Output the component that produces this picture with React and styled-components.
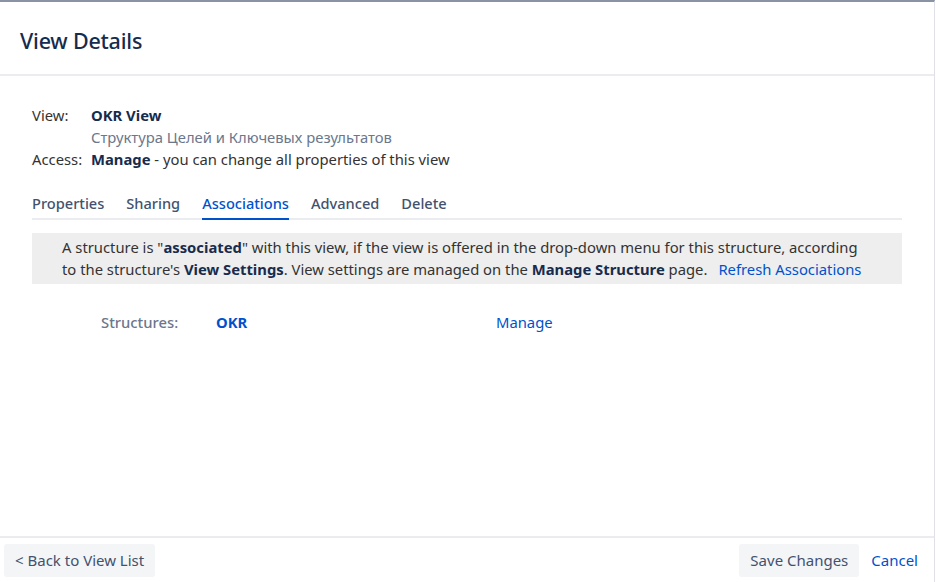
import React from 'react';
import styled, { createGlobalStyle } from 'styled-components';

const Global = createGlobalStyle`
  html, body { margin: 0; padding: 0; background: #fff; }
  body { font-family: "Noto Sans", "Liberation Sans", sans-serif; color: #172b4d; }
`;

const Dialog = styled.div`
  width: 935px;
  height: 582px;
  box-sizing: border-box;
  border-top: 2px solid #8993a4;
  border-right: 1px solid #dfe1e6;
  display: flex;
  flex-direction: column;
`;

const Header = styled.div`
  height: 74px;
  flex-shrink: 0;
  box-sizing: border-box;
  display: flex;
  align-items: center;
  padding: 5px 20px 0 20px;
  border-bottom: 2px solid #ebecf0;
`;

const Title = styled.h1`
  margin: 0;
  font-size: 21.5px;
  font-weight: 500;
  color: #172b4d;
  letter-spacing: -0.2px;
`;

const Body = styled.div`
  flex: 1;
  padding: 28px 32px 0 32px;
`;

const Meta = styled.div`
  display: grid;
  grid-template-columns: 59px auto;
  font-size: 14.8px;
  line-height: 22px;
`;

const Label = styled.div`
  color: #333;
`;

const Value = styled.div`
  color: ${p => (p.muted ? '#6b778c' : '#333')};
  b { color: #172b4d; font-weight: 700; }
`;

const Tabs = styled.div`
  display: flex;
  gap: 22px;
  margin-top: 23px;
  border-bottom: 2px solid #ebecf0;
`;

const Tab = styled.div`
  font-size: 14.6px;
  font-weight: 500;
  line-height: 20px;
  padding-bottom: 5px;
  margin-bottom: -2px;
  color: ${p => (p.active ? '#0052cc' : '#42526e')};
  border-bottom: 2px solid ${p => (p.active ? '#0052cc' : 'transparent')};
`;

const Info = styled.div`
  margin-top: 13px;
  background: #eeeeee;
  padding: 3px 30px 4px 30px;
  font-size: 14.8px;
  line-height: 22px;
  color: #333;
  white-space: nowrap;
  b { color: #172b4d; font-weight: 700; }
`;

const Link = styled.a`
  color: #0052cc;
  text-decoration: none;
  font-weight: ${p => (p.bold ? 700 : 400)};
  margin-left: ${p => p.gap || 0}px;
`;

const StructRow = styled.div`
  display: grid;
  grid-template-columns: 115px 280px auto;
  padding: 27px 0 0 69px;
  font-size: 14.8px;
  line-height: 22px;
`;

const StructLabel = styled.div`
  color: #6b778c;
  font-weight: 500;
`;

const Footer = styled.div`
  height: 44px;
  flex-shrink: 0;
  border-top: 2px solid #ebecf0;
  display: flex;
  align-items: center;
  padding: 0 16px 0 4px;
  gap: 12px;
`;

const Button = styled.button`
  font-family: inherit;
  font-size: 15px;
  color: #42526e;
  background: #f4f5f7;
  border: none;
  border-radius: 3px;
  height: 33px;
  padding: 0 11px;
`;

const Spacer = styled.div`
  flex: 1;
`;

const FooterLink = styled.a`
  font-size: 15px;
  color: #0052cc;
  text-decoration: none;
`;

export default function App() {
  return (
    <>
      <Global />
      <Dialog>
        <Header>
          <Title>View Details</Title>
        </Header>
        <Body>
          <Meta>
            <Label>View:</Label>
            <Value><b>OKR View</b></Value>
            <Label />
            <Value muted>Структура Целей и Ключевых результатов</Value>
            <Label>Access:</Label>
            <Value><b>Manage</b> - you can change all properties of this view</Value>
          </Meta>
          <Tabs>
            <Tab>Properties</Tab>
            <Tab>Sharing</Tab>
            <Tab active>Associations</Tab>
            <Tab>Advanced</Tab>
            <Tab>Delete</Tab>
          </Tabs>
          <Info>
            A structure is "<b>associated</b>" with this view, if the view is offered in the drop-down menu for this structure, according
            <br />
            to the structure's <b>View Settings</b>. View settings are managed on the <b>Manage Structure</b> page.
            <Link gap={11}>Refresh Associations</Link>
          </Info>
          <StructRow>
            <StructLabel>Structures:</StructLabel>
            <Link bold>OKR</Link>
            <Link>Manage</Link>
          </StructRow>
        </Body>
        <Footer>
          <Button>&lt; Back to View List</Button>
          <Spacer />
          <Button>Save Changes</Button>
          <FooterLink>Cancel</FooterLink>
        </Footer>
      </Dialog>
    </>
  );
}
